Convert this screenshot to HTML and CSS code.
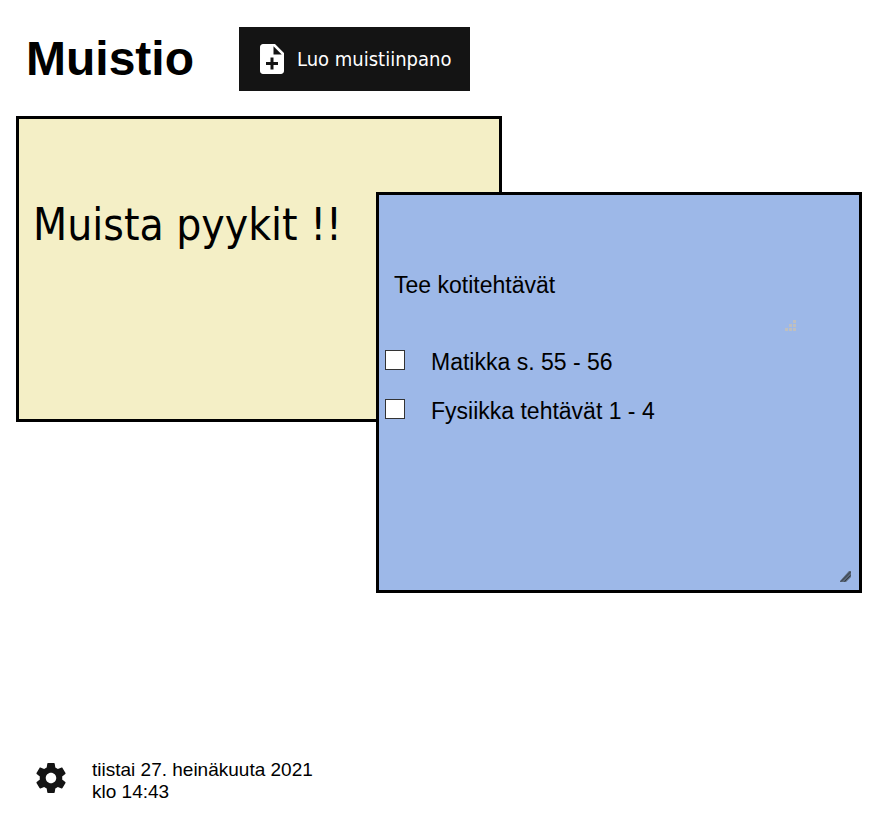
FILE: index.html
```html
<!DOCTYPE html>
<html lang="fi">
<head>
<meta charset="utf-8">
<meta name="viewport" content="width=device-width, initial-scale=1">
<title>Muistio</title>
<link rel="stylesheet" href="styles.css">
</head>
<body>
<header class="topbar">
  <h1 class="title">Muistio</h1>
  <button class="create" type="button">
    <svg class="icon" viewBox="0 0 24 24" aria-hidden="true"><path d="M14 2H6c-1.1 0-1.99.9-1.99 2L4 20c0 1.1.89 2 1.99 2H18c1.1 0 2-.9 2-2V8l-6-6zm2 14h-3v3h-2v-3H8v-2h3v-3h2v3h3v2zm-3-7V3.5L18.5 9H13z"/></svg>
    <span>Luo muistiinpano</span>
  </button>
</header>
<main class="board">
  <article class="note note-yellow">
    <textarea class="text text-large" rows="1" aria-label="Muistiinpano" spellcheck="false">Muista pyykit !!</textarea>
  </article>
  <article class="note note-blue">
    <div class="field">
      <textarea class="text" rows="2" aria-label="Tehtävälista" spellcheck="false">Tee kotitehtävät</textarea>
      <svg class="field-grip" viewBox="0 0 11 11" aria-hidden="true"><path d="M0 8h3v3H0zM4 8h3v3H4zM8 8h3v3H8zM4 4h3v3H4zM8 4h3v3H8zM8 0h3v3H8z"/></svg>
    </div>
    <ul class="tasks">
      <li><label class="task"><input class="check" type="checkbox"><span>Matikka s. 55 - 56</span></label></li>
      <li><label class="task"><input class="check" type="checkbox"><span>Fysiikka tehtävät 1 - 4</span></label></li>
    </ul>
    <svg class="note-grip" viewBox="0 0 12 12" aria-hidden="true"><path class="grip-fill" d="M0 11V10L9 0h2v6l-5 5z"/><path class="grip-lines" d="M1 10.500 10.500 1M4.500 10.500l6-6"/></svg>
  </article>
</main>
<footer class="status">
  <button class="settings" type="button" aria-label="Asetukset">
    <svg class="icon" viewBox="0 0 24 24" aria-hidden="true"><path d="M19.430 12.980c.04-.32.07-.64.07-.98s-.03-.66-.07-.98l2.110-1.650c.19-.15.24-.42.12-.64l-2-3.460c-.12-.22-.39-.3-.61-.22l-2.490 1c-.52-.4-1.080-.73-1.690-.98l-.38-2.650C14.460 2.180 14.250 2 14 2h-4c-.25 0-.46.18-.49.42l-.38 2.650c-.61.25-1.170.59-1.690.98l-2.490-1c-.23-.09-.49 0-.61.22l-2 3.460c-.13.22-.07.49.12.64l2.110 1.650c-.04.32-.07.65-.07.98s.03.66.07.98l-2.110 1.650c-.19.15-.24.42-.12.64l2 3.460c.12.22.39.3.61.22l2.490-1c.52.4 1.080.73 1.690.98l.38 2.650c.03.24.24.42.49.42h4c.25 0 .46-.18.49-.42l.38-2.650c.61-.25 1.170-.59 1.690-.98l2.490 1c.23.09.49 0 .61-.22l2-3.460c.12-.22.07-.49-.12-.64l-2.110-1.650zM12 15.500c-1.930 0-3.500-1.570-3.500-3.500s1.570-3.500 3.500-3.500 3.500 1.570 3.500 3.500-1.570 3.500-3.500 3.500z"/></svg>
  </button>
  <time class="clock" datetime="2021-07-27T14:43">tiistai 27. heinäkuuta 2021<br>klo 14:43</time>
</footer>
</body>
</html>
```
FILE: styles.css
```css
* {
  box-sizing: border-box;
}

body {
  margin: 0;
  min-height: 100vh;
  display: flex;
  flex-direction: column;
  background: #fff;
  color: #000;
  font-family: "Liberation Sans", Arial, sans-serif;
}

.topbar {
  display: flex;
  align-items: center;
  gap: 45px;
  padding: 27px 26px 0;
}

.title {
  margin: 0;
  font-size: 48px;
  line-height: 64px;
}

.create {
  display: flex;
  align-items: center;
  gap: 7px;
  height: 64px;
  padding: 0 19px 0 15px;
  border: 0;
  background: #141414;
  color: #fff;
  font: 20px "DejaVu Sans Condensed", Tahoma, sans-serif;
}

.icon {
  display: block;
  width: 36px;
  height: 36px;
  fill: currentColor;
}

.board {
  position: relative;
  flex: 1;
  min-height: 520px;
}

.note {
  position: absolute;
  width: 486px;
  border: 3px solid #000;
}

.note-yellow {
  left: 16px;
  top: 25px;
  min-height: 306px;
  padding: 74px 14px;
  background: #f4efc6;
}

.note-blue {
  left: 376px;
  top: 101px;
  min-height: 401px;
  padding: 74px 6px;
  background: #9db8e8;
}

.text {
  display: block;
  width: 100%;
  padding: 0;
  border: 0;
  outline: 0;
  overflow: hidden;
  resize: none;
  background: transparent;
  color: inherit;
  font: 23px/32px "Liberation Sans", Arial, sans-serif;
}

.text-large {
  font: 44px/64px "DejaVu Sans Condensed", Tahoma, sans-serif;
}

.field {
  position: relative;
  width: 404px;
  margin-left: 9px;
}

.field-grip {
  position: absolute;
  right: 2px;
  bottom: 2px;
  width: 11px;
  height: 11px;
  fill: #bfbfbf;
}

.tasks {
  display: grid;
  gap: 17px;
  margin: 0;
  padding: 13px 0 0;
  list-style: none;
}

.task {
  display: flex;
  align-items: flex-start;
  gap: 26px;
  font-size: 23px;
  line-height: 32px;
}

.check {
  appearance: none;
  width: 20px;
  height: 20px;
  margin: 4px 0 0;
  border: 1px solid #333;
  background: #fff;
}

.check:checked {
  background: #333;
  box-shadow: inset 0 0 0 3px #fff;
}

.note-grip {
  position: absolute;
  right: 7px;
  bottom: 7px;
  width: 12px;
  height: 12px;
}

.grip-fill {
  fill: #596779;
}

.grip-lines {
  fill: none;
  stroke: #343a44;
  stroke-width: 1;
}

.status {
  display: flex;
  align-items: flex-start;
  gap: 23px;
  padding: 0 33px 25px;
}

.settings {
  padding: 1px 0 0;
  border: 0;
  background: none;
  color: #141414;
}

.clock {
  font-size: 19px;
  line-height: 22px;
}
```
